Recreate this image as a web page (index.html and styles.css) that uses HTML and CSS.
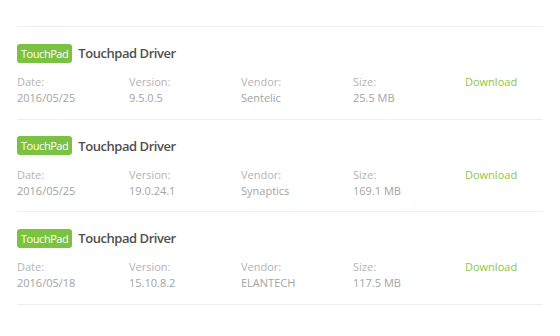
FILE: index.html
```html
<!DOCTYPE html>
<html>
<head>
<meta charset="utf-8">
<link rel="stylesheet" href="styles.css">
</head>
<body>
<div class="list">
  <div class="item">
    <div class="head"><span class="badge">TouchPad</span><span class="title">Touchpad Driver</span></div>
    <div class="meta">
      <div class="cell"><div class="label">Date:</div><div class="value">2016/05/25</div></div>
      <div class="cell"><div class="label">Version:</div><div class="value">9.5.0.5</div></div>
      <div class="cell"><div class="label">Vendor:</div><div class="value">Sentelic</div></div>
      <div class="cell"><div class="label">Size:</div><div class="value">25.5 MB</div></div>
      <div class="cell"><a class="dl" href="#">Download</a></div>
    </div>
  </div>
  <div class="item">
    <div class="head"><span class="badge">TouchPad</span><span class="title">Touchpad Driver</span></div>
    <div class="meta">
      <div class="cell"><div class="label">Date:</div><div class="value">2016/05/25</div></div>
      <div class="cell"><div class="label">Version:</div><div class="value">19.0.24.1</div></div>
      <div class="cell"><div class="label">Vendor:</div><div class="value">Synaptics</div></div>
      <div class="cell"><div class="label">Size:</div><div class="value">169.1 MB</div></div>
      <div class="cell"><a class="dl" href="#">Download</a></div>
    </div>
  </div>
  <div class="item">
    <div class="head"><span class="badge">TouchPad</span><span class="title">Touchpad Driver</span></div>
    <div class="meta">
      <div class="cell"><div class="label">Date:</div><div class="value">2016/05/18</div></div>
      <div class="cell"><div class="label">Version:</div><div class="value">15.10.8.2</div></div>
      <div class="cell"><div class="label">Vendor:</div><div class="value">ELANTECH</div></div>
      <div class="cell"><div class="label">Size:</div><div class="value">117.5 MB</div></div>
      <div class="cell"><a class="dl" href="#">Download</a></div>
    </div>
  </div>
</div>
</body>
</html>
```
FILE: styles.css
```css
html, body {
  margin: 0;
  padding: 0;
  background: #ffffff;
}
body {
  font-family: "Open Sans", "Noto Sans", sans-serif;
}
.list {
  margin: 26px 0 0 17px;
  width: 526px;
  border-bottom: 1px solid #eeeeee;
}
.item {
  border-top: 1px solid #eeeeee;
  padding: 16px 0 12px;
  height: 63.5px;
}
.head {
  display: flex;
  align-items: center;
  gap: 6px;
  height: 20px;
}
.badge {
  background: #7cc242;
  color: #ffffff;
  font-size: 11px;
  line-height: 19px;
  height: 19px;
  padding: 0 4px;
  border-radius: 3px;
  letter-spacing: -0.45px;
}
.title {
  font-size: 13px;
  font-weight: 600;
  color: #4f4f4f;
  letter-spacing: -0.45px;
}
.meta {
  display: grid;
  grid-template-columns: repeat(5, 112px);
  margin-top: 11px;
  font-size: 11px;
  line-height: 16px;
}
.label {
  color: #b4b4b4;
}
.value {
  color: #a3a3a3;
}
.dl {
  color: #8cc63f;
  text-decoration: none;
}
```
